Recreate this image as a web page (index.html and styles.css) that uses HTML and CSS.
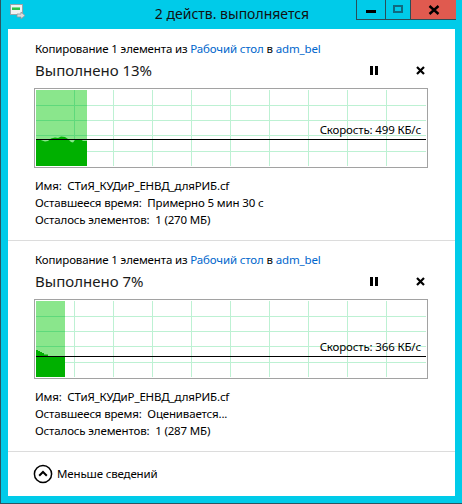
FILE: index.html
```html
<!DOCTYPE html>
<html lang="ru">
<head>
<meta charset="utf-8">
<title>2 действ. выполняется</title>
<link rel="stylesheet" href="styles.css">
</head>
<body>
<div class="window">
  <div class="titlebar">
    <div class="app-icon">
      <svg width="16" height="16" viewBox="0 0 16 16">
        <rect x="0.5" y="0.5" width="12" height="10" fill="#f2f2f2" stroke="#9aa4a8"/>
        <rect x="2" y="3" width="8" height="3" fill="#2fc24a"/>
        <rect x="2" y="3" width="8" height="1" fill="#7ee08e"/>
        <path d="M7 10 H11 V8 L15 11.5 L11 15 V13 H7 Z" fill="#d9dcdd" stroke="#8d979b" stroke-width="0.8"/>
      </svg>
    </div>
    <div class="title">2 действ. выполняется</div>
    <div class="caption-buttons">
      <div class="cbtn cbtn-min"><span class="min-bar"></span></div>
      <div class="cbtn cbtn-max"><span class="max-box"></span></div>
      <div class="cbtn cbtn-close">
        <svg width="12" height="10" viewBox="0 0 12 10"><path d="M1.5 1 L10.5 9 M10.5 1 L1.5 9" stroke="#000" stroke-width="2.4"/></svg>
      </div>
    </div>
  </div>

  <div class="content">
    <section class="op op-first">
      <div class="op-desc">Копирование 1 элемента из <a class="link">Рабочий стол</a> в <a class="link">adm_bel</a></div>
      <div class="op-head">
        <div class="op-progress">Выполнено 13%</div>
        <button class="icon-btn pause" aria-label="Пауза"><span></span><span></span></button>
        <button class="icon-btn cancel" aria-label="Отмена">
          <svg width="9" height="9" viewBox="0 0 9 9"><path d="M1 1 L8 8 M8 1 L1 8" stroke="#000" stroke-width="2.2"/></svg>
        </button>
      </div>
      <div class="graph">
        <svg class="plot" width="390" height="76" viewBox="0 0 390 76">
          <defs>
            <clipPath id="c1"><rect x="0" y="0" width="51" height="76"/></clipPath>
          </defs>
          <rect x="0" y="0" width="51" height="76" fill="#8ae68c"/>
          <g stroke="#bdf1d3" stroke-width="1">
            <path d="M38.5 0V76M77.5 0V76M116.5 0V76M155.5 0V76M194.5 0V76M233.5 0V76M272.5 0V76M311.5 0V76M350.5 0V76"/>
            <path d="M0 15.5H390M0 30.5H390M0 45.5H390M0 61.5H390"/>
          </g>
          <g stroke="#5fd97b" stroke-width="1" clip-path="url(#c1)">
            <path d="M38.5 0V76"/>
            <path d="M0 15.5H390M0 30.5H390M0 45.5H390M0 61.5H390"/>
          </g>
          <path d="M0 49 L3 49 L6 50.5 L9 51.5 L12 51 L15 48.5 L19 47.5 L22 48 L25 46.5 L29 47 L32 49 L35 52 L37 52.5 L39 50 L42 49 L45 49.5 L47 51 L51 51 L51 76 L0 76 Z" fill="#00b000"/>
          <path d="M0 49.5H392" stroke="#000" stroke-width="1"/>
        </svg>
        <div class="speed" style="top:34px">Скорость: 499 КБ/с</div>
      </div>
      <div class="details">
        <div class="row">Имя:&nbsp; СТиЯ_КУДиР_ЕНВД_дляРИБ.cf</div>
        <div class="row">Оставшееся время:&nbsp; Примерно 5 мин 30 с</div>
        <div class="row">Осталось элементов:&nbsp; 1 (270 МБ)</div>
      </div>
    </section>

    <section class="op op-second">
      <div class="op-desc">Копирование 1 элемента из <a class="link">Рабочий стол</a> в <a class="link">adm_bel</a></div>
      <div class="op-head">
        <div class="op-progress">Выполнено 7%</div>
        <button class="icon-btn pause" aria-label="Пауза"><span></span><span></span></button>
        <button class="icon-btn cancel" aria-label="Отмена">
          <svg width="9" height="9" viewBox="0 0 9 9"><path d="M1 1 L8 8 M8 1 L1 8" stroke="#000" stroke-width="2.2"/></svg>
        </button>
      </div>
      <div class="graph">
        <svg class="plot" width="390" height="76" viewBox="0 0 390 76">
          <defs>
            <clipPath id="c2"><rect x="0" y="0" width="29" height="76"/></clipPath>
          </defs>
          <rect x="0" y="0" width="29" height="76" fill="#8ae68c"/>
          <g stroke="#bdf1d3" stroke-width="1">
            <path d="M38.5 0V76M77.5 0V76M116.5 0V76M155.5 0V76M194.5 0V76M233.5 0V76M272.5 0V76M311.5 0V76M350.5 0V76"/>
            <path d="M0 15.5H390M0 30.5H390M0 45.5H390M0 61.5H390"/>
          </g>
          <g stroke="#5fd97b" stroke-width="1" clip-path="url(#c2)">
            <path d="M0 15.5H390M0 30.5H390M0 45.5H390M0 61.5H390"/>
          </g>
          <path d="M0 49 L2 49 L2 50 L4 50 L4 51 L6 51 L6 52 L8 52 L8 53.5 L12 53.5 L12 55 L29 55 L29 76 L0 76 Z" fill="#00b000"/>
          <path d="M0 55.5H392" stroke="#000" stroke-width="1"/>
        </svg>
        <div class="speed" style="top:40px">Скорость: 366 КБ/с</div>
      </div>
      <div class="details">
        <div class="row">Имя:&nbsp; СТиЯ_КУДиР_ЕНВД_дляРИБ.cf</div>
        <div class="row">Оставшееся время:&nbsp; Оценивается...</div>
        <div class="row">Осталось элементов:&nbsp; 1 (287 МБ)</div>
      </div>
    </section>

    <div class="footer">
      <span class="chev">
        <svg width="20" height="20" viewBox="0 0 20 20">
          <circle cx="10" cy="10" r="8.6" fill="none" stroke="#000" stroke-width="1.5"/>
          <path d="M6.2 11.8 L10 8 L13.8 11.8" fill="none" stroke="#000" stroke-width="2"/>
        </svg>
      </span>
      <span class="footer-text">Меньше сведений</span>
    </div>
  </div>
</div>
</body>
</html>
```

FILE: styles.css
```css
* { box-sizing: border-box; }
html, body {
  margin: 0;
  padding: 0;
  background: #fff;
}
body {
  font-family: "Noto Sans", "Open Sans", sans-serif;
  color: #000;
}
.window {
  width: 462px;
  height: 504px;
  background: #00cbe9;
  border-left: 1px solid #2d5560;
  border-bottom: 1px solid #2d5560;
  display: flex;
  flex-direction: column;
}
.titlebar {
  height: 29px;
  flex: none;
  display: grid;
  grid-template-columns: 1fr auto 1fr;
  align-items: start;
}
.app-icon {
  padding: 4px 0 0 9px;
  height: 20px;
}
.app-icon svg { display: block; }
.title {
  font-size: 14px;
  line-height: 20px;
  padding-top: 4px;
  color: #111;
  white-space: nowrap;
  margin-left: 1px;
}
.caption-buttons {
  justify-self: end;
  display: flex;
  margin-right: 6px;
  height: 20px;
  border-bottom: 1px solid #2a4e58;
}
.cbtn {
  height: 19px;
  display: flex;
  align-items: center;
  justify-content: center;
  border-left: 1px solid #2a4e58;
}
.cbtn-min { width: 29px; }
.cbtn-max { width: 25px; }
.cbtn-close {
  width: 46px;
  background: #e05a4f;
}
.cbtn-close svg { display: block; }
.min-bar {
  width: 10px;
  height: 3px;
  background: #000;
  margin-top: 3px;
}
.max-box {
  width: 10px;
  height: 8px;
  border: 2px solid #0f6a80;
  margin-top: -2px;
}
.content {
  flex: 1;
  margin: 0 7px 7px 7px;
  background: #fff;
  display: flex;
  flex-direction: column;
}
.op {
  padding: 12px 0 12px 26px;
  border-bottom: 1px solid #dcdcdc;
}
.op-second { padding-top: 11px; }
.op-desc {
  font-size: 11.5px;
  letter-spacing: -0.15px;
  line-height: 16px;
  padding-left: 1px;
  white-space: nowrap;
  color: #000;
}
.link {
  color: #0066cc;
  text-decoration: none;
}
.op-head {
  display: flex;
  align-items: center;
  margin-top: 3px;
  height: 20px;
  width: 394px;
}
.op-progress {
  flex: 1;
  font-size: 15px;
  line-height: 20px;
  padding-left: 1px;
  color: #1a1a1a;
}
.icon-btn {
  border: 0;
  background: none;
  padding: 0;
  margin: 0;
  display: flex;
  align-items: center;
}
.pause {
  gap: 2px;
  margin-right: 38px;
  height: 9px;
}
.pause span {
  display: block;
  width: 3px;
  height: 9px;
  background: #000;
}
.cancel {
  margin-right: 3px;
}
.cancel svg { display: block; }
.graph {
  position: relative;
  margin-top: 8px;
  width: 394px;
  height: 80px;
  border: 1px solid #a2a2a2;
  padding: 1px;
}
.plot { display: block; }
.speed {
  position: absolute;
  right: 6px;
  font-size: 11.5px;
  letter-spacing: -0.15px;
  line-height: 14px;
  color: #000;
  white-space: nowrap;
}
.details {
  margin-top: 9px;
  padding-left: 1px;
}
.row {
  font-size: 11.5px;
  letter-spacing: -0.15px;
  line-height: 17px;
  white-space: nowrap;
}
.footer {
  flex: 1;
  display: flex;
  align-items: center;
  padding-left: 25px;
  padding-bottom: 1px;
}
.chev svg { display: block; }
.footer-text {
  margin-left: 4px;
  font-size: 11.5px;
  letter-spacing: -0.15px;
  line-height: 18px;
}
```
